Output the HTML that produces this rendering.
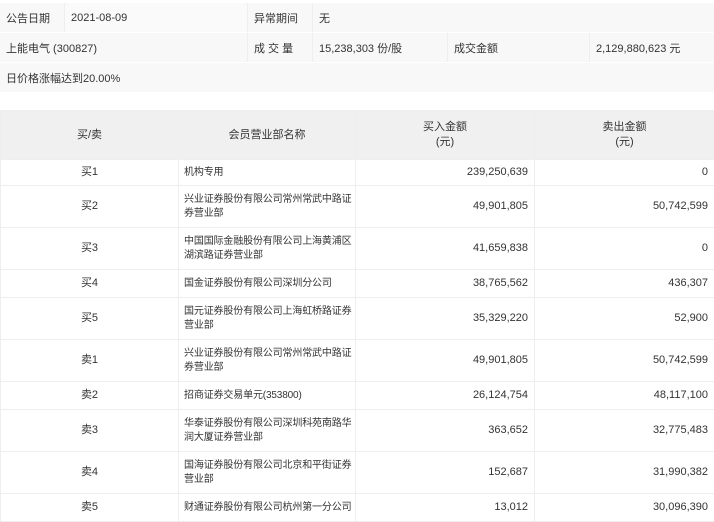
<!DOCTYPE html>
<html><head><meta charset="utf-8"><style>
body{margin:0;background:#fff;font-family:"Liberation Sans","Noto Sans CJK SC",sans-serif;font-size:11px;color:#333;width:714px;height:521px;overflow:hidden;position:relative}
.r{position:absolute;box-sizing:border-box}
.t1{background:#f8f8f8;border-bottom:1px solid #fff;}
.c{position:absolute;top:0;bottom:0;display:flex;align-items:center;padding-left:6px;box-sizing:border-box;border-right:1px solid #eee}
table{position:absolute;left:0;top:110px;width:714px;border-collapse:collapse;table-layout:fixed}
td,th{border:1px solid #eee;font-weight:normal;padding:0 6px;line-height:15px}
th{background:#f0f0f0;height:48px;text-align:center}
td.a{text-align:center}td.n{text-align:right}
td.m{font-size:10px;letter-spacing:-0.15px;padding:0 1px 0 5px;line-height:14px}
</style></head><body>
<div class="r t1" style="left:0;top:3px;width:714px;height:30px">
<div class="c" style="left:0;width:65px">公告日期</div><div class="c" style="left:65px;width:183px;background:#fafafa">2021-08-09</div>
<div class="c" style="left:248px;width:65px">异常期间</div><div class="c" style="left:313px;width:401px;border:none">无</div></div>
<div class="r t1" style="left:0;top:33px;width:714px;height:30px">
<div class="c" style="left:0;width:248px">上能电气 (300827)</div><div class="c" style="left:248px;width:65px">成 交 量</div>
<div class="c" style="left:313px;width:135px">15,238,303 份/股</div><div class="c" style="left:448px;width:142px">成交金额</div>
<div class="c" style="left:590px;width:124px;border:none">2,129,880,623 元</div></div>
<div class="r t1" style="left:0;top:63px;width:714px;height:30px"><div class="c" style="left:0;width:714px;border:none">日价格涨幅达到20.00%</div></div>
<table>
<colgroup><col style="width:178px"><col style="width:177px"><col style="width:179px"><col style="width:180px"></colgroup>
<tr><th>买/卖</th><th>会员营业部名称</th><th>买入金额<br>(元)</th><th>卖出金额<br>(元)</th></tr>
<tr style="height:26px"><td class="a">买1</td><td class="m">机构专用</td><td class="n">239,250,639</td><td class="n">0</td></tr>
<tr style="height:42px"><td class="a">买2</td><td class="m">兴业证券股份有限公司常州常武中路证券营业部</td><td class="n">49,901,805</td><td class="n">50,742,599</td></tr>
<tr style="height:42px"><td class="a">买3</td><td class="m">中国国际金融股份有限公司上海黄浦区湖滨路证券营业部</td><td class="n">41,659,838</td><td class="n">0</td></tr>
<tr style="height:28px"><td class="a">买4</td><td class="m">国金证券股份有限公司深圳分公司</td><td class="n">38,765,562</td><td class="n">436,307</td></tr>
<tr style="height:42px"><td class="a">买5</td><td class="m">国元证券股份有限公司上海虹桥路证券营业部</td><td class="n">35,329,220</td><td class="n">52,900</td></tr>
<tr style="height:42px"><td class="a">卖1</td><td class="m">兴业证券股份有限公司常州常武中路证券营业部</td><td class="n">49,901,805</td><td class="n">50,742,599</td></tr>
<tr style="height:28px"><td class="a">卖2</td><td class="m">招商证券交易单元(353800)</td><td class="n">26,124,754</td><td class="n">48,117,100</td></tr>
<tr style="height:42px"><td class="a">卖3</td><td class="m">华泰证券股份有限公司深圳科苑南路华润大厦证券营业部</td><td class="n">363,652</td><td class="n">32,775,483</td></tr>
<tr style="height:42px"><td class="a">卖4</td><td class="m">国海证券股份有限公司北京和平街证券营业部</td><td class="n">152,687</td><td class="n">31,990,382</td></tr>
<tr style="height:28px"><td class="a">卖5</td><td class="m">财通证券股份有限公司杭州第一分公司</td><td class="n">13,012</td><td class="n">30,096,390</td></tr>
</table>
</body></html>
